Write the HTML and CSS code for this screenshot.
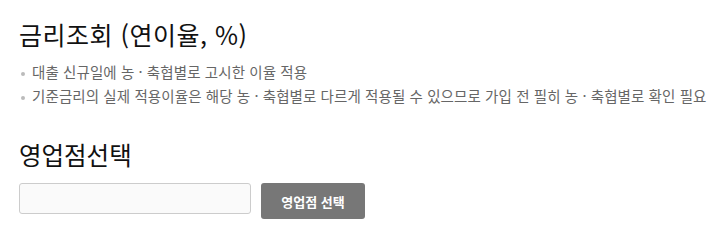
FILE: index.html
```html
<!DOCTYPE html>
<html lang="ko">
<head>
<meta charset="utf-8">
<title>금리조회</title>
<link rel="stylesheet" href="styles.css">
</head>
<body>
<div class="page">
  <h2 class="title title-rate">금리조회 (연이율, %)</h2>
  <ul class="notes">
    <li>대출 신규일에 농 · 축협별로 고시한 이율 적용</li>
    <li>기준금리의 실제 적용이율은 해당 농 · 축협별로 다르게 적용될 수 있으므로 가입 전 필히 농 · 축협별로 확인 필요</li>
  </ul>
  <h2 class="title title-branch">영업점선택</h2>
  <div class="branch-row">
    <input class="branch-input" type="text" aria-label="영업점">
    <button class="branch-btn" type="button">영업점 선택</button>
  </div>
</div>
</body>
</html>
```

FILE: styles.css
```css
html, body {
  margin: 0;
  padding: 0;
  background: #fff;
}
body {
  font-family: "Noto Sans CJK KR", "Noto Sans", sans-serif;
  color: #222;
}
.page {
  padding: 18px 19px 0 19px;
}
.title {
  margin: 0;
  line-height: 32px;
  font-weight: 400;
  color: #111;
}
.title-rate {
  font-size: 25px;
  letter-spacing: 0.5px;
}
.title-branch {
  margin-top: 31px;
  font-size: 24.5px;
}
.notes {
  list-style: none;
  margin: 10px 0 0 0;
  padding: 0;
}
.notes li {
  position: relative;
  padding-left: 13px;
  font-size: 14.5px;
  line-height: 24px;
  color: #666;
  letter-spacing: 0.1px;
  white-space: nowrap;
}
.notes li::before {
  content: "";
  position: absolute;
  left: 2px;
  top: 12px;
  width: 4px;
  height: 4px;
  border-radius: 50%;
  background: #bbb;
}
.branch-row {
  display: flex;
  align-items: flex-start;
  gap: 10px;
  margin-top: 12px;
}
.branch-input {
  box-sizing: border-box;
  width: 232px;
  height: 31px;
  margin: 0;
  border: 1px solid #ccc;
  border-radius: 3px;
  background: #fafafa;
  padding: 0 8px;
  font: inherit;
}
.branch-btn {
  box-sizing: border-box;
  width: 104px;
  height: 36px;
  margin: 0;
  border: 0;
  border-radius: 3px;
  background: #777;
  color: #fff;
  font-family: "Noto Sans CJK KR", "Noto Sans", sans-serif;
  font-size: 13px;
  font-weight: 700;
  padding: 0;
}
```
